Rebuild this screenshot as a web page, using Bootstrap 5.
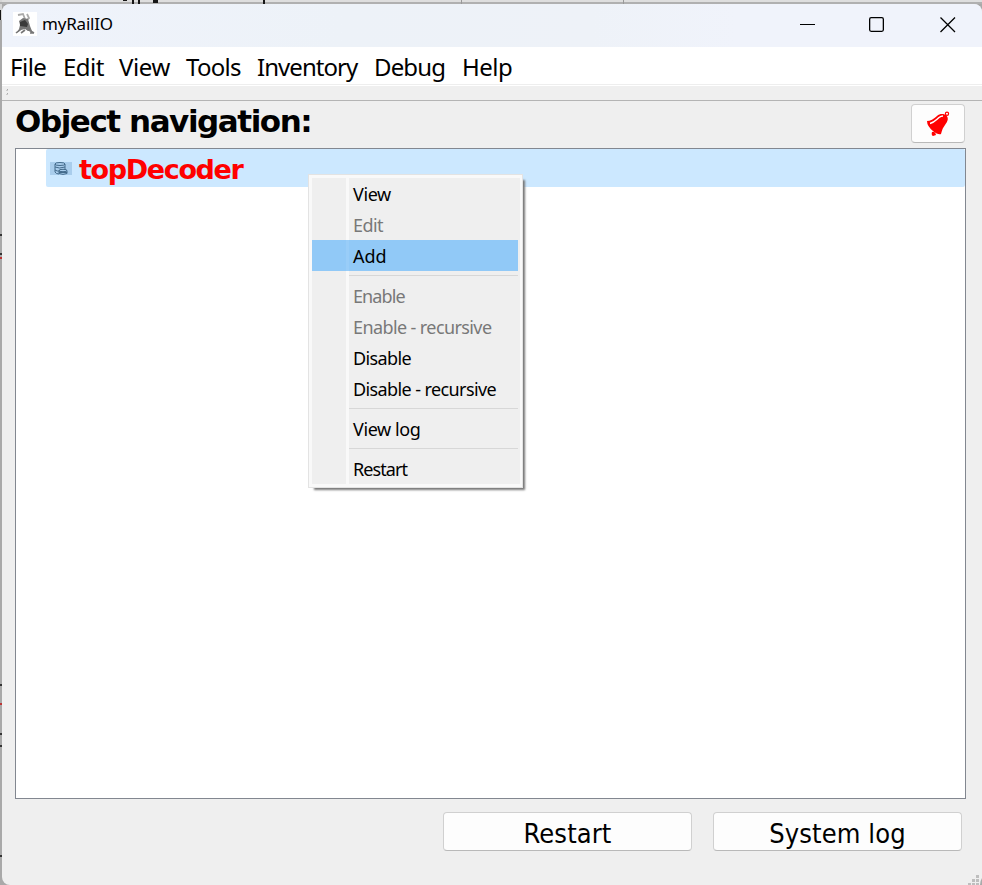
<!DOCTYPE html>
<html lang="en">
<head>
<meta charset="utf-8">
<title>myRailIO</title>
<link href="https://cdn.jsdelivr.net/npm/bootstrap@5.3.0/dist/css/bootstrap.min.css" rel="stylesheet">
<style>
html,body{width:982px;height:885px;overflow:hidden}
body{background:#a9a9a9;color:#000;font-family:"Noto Sans","Open Sans",sans-serif;padding:4px 0 0 2px;position:relative}
.backdrop{position:absolute;left:0;top:0;width:982px;height:885px}
.app-window{position:relative;background:#efefef;width:980px;height:881px;border-radius:8px 8px 0 8px;overflow:hidden}
.title-bar{height:43px;background:linear-gradient(90deg,#eff3fb 0,#edf2f8 35%,#eef2f8 60%,#f0f3fb 75%);padding:0 0 3px 11px}
.title-text{font-size:17px;line-height:24px;letter-spacing:-.2px;margin-left:5px}
.win-icons{width:160px;margin-right:24px}
.menu-bar{height:39px;background:#fff;border-bottom:1px solid #fff;box-shadow:inset 0 -1px #eee;padding-left:8px;gap:16px;font-size:24px;line-height:39px;letter-spacing:-.5px}
.menu-bar a{color:#000;text-decoration:none;white-space:nowrap}
.w-file{width:37px}.w-edit{width:40px}.w-view{width:51px;letter-spacing:-.4px}.w-tools{width:55px;letter-spacing:-.7px}.w-inv{width:101px;letter-spacing:-.95px}.w-debug{width:72px;letter-spacing:-.85px}.w-help{width:50px}
.tool-strip{height:15px;border-bottom:1px solid #b4b4b4;padding:3px 0 0 4px}
.tahoma{font-family:"DejaVu Sans Condensed","DejaVu Sans",sans-serif;font-stretch:condensed}
.tahoma-bold{font-family:"DejaVu Sans",sans-serif;font-stretch:normal;font-weight:700}
.head-row{height:47px;padding:0 17px 0 13px}
.head-row h1{font-size:31px;line-height:40px;margin:0;letter-spacing:-1.45px;white-space:nowrap}
.plain-btn{background:#fdfdfd;border:1px solid #d0d0d0;border-bottom-color:#b9b9b9;border-radius:4px;height:39px;padding:0;color:#000;line-height:41px;font-size:27px;white-space:nowrap}
.bell-btn{width:54px;margin-top:3px}
.tree{margin-left:13px;width:951px;height:651px;background:#fff;border:1px solid #828790}
.tree-row{margin-left:30px;height:38px;background:#cce8ff;border-radius:2px;padding-left:4px}
.tree-row span{font-size:27px;line-height:40px;padding-top:3px;color:#f00;margin-left:7px;letter-spacing:-1.35px}
.foot-row{padding:13px 20px 0 0;gap:21px}
.foot-row .plain-btn{width:249px;letter-spacing:.1px}
.grip{position:absolute;right:0;bottom:0}
.ctx{position:absolute;left:308px;top:174px;width:215px;height:314px;border:1px solid #e3e3e3;background:#f9f9f9;padding:3px 3px;box-shadow:4px 4px 2px -2px #777;font-size:18px;letter-spacing:-.6px}
.ctx-body{width:208px;background:linear-gradient(90deg,#efefef 34px,#f9f9f9 34px,#f9f9f9 37px,#efefef 37px)}
.ctx-item{height:31px;line-height:33px;padding-left:41px;white-space:nowrap}
.ctx-item.off{color:#787878}
.ctx-item.loose{letter-spacing:-.4px}
.ctx-item.tight{letter-spacing:-.9px}
.ctx-item.hot{letter-spacing:0;width:206px;background:linear-gradient(90deg,#91c9f7 34px,#99cdf8 34px,#99cdf8 37px,#91c9f7 37px)}
.ctx-sep{height:9px;margin-left:37px;width:169px;background:linear-gradient(#d7d7d7,#d7d7d7) 0 4px/100% 1px no-repeat}
</style>
</head>
<body>
<svg class="backdrop" width="982" height="885" viewBox="0 0 982 885">
<rect width="982" height="3" fill="#dedede"/><rect width="2" height="20" fill="#d6d6d6"/>
<path d="M0 3H982" stroke="#b0b0b0" stroke-width="2"/>
<path d="M123 0h4v1h-4zM132 0h2v4h-2zM138 0h2v4h-2zM153 0h5v3h-5zM263 0h2v4h-2zM0 10h1v10H0z" fill="#161616"/>
<path d="M461.500 0v4M623.500 0v4" stroke="#999"/>
<path d="M0 235h2M0 254h2M0 685h2M0 734h2M0 746h2M0 856h2" stroke="#333" stroke-width="2"/>
<path d="M0 258h2M0 704h2" stroke="#b33" stroke-width="2"/>
</svg>
<main class="app-window">
<header class="title-bar d-flex align-items-center">
<svg width="24" height="24" viewBox="0 0 24 24"><rect width="24" height="24" fill="#fff"/><path d="M5 3l5-1 2 5M14 2l2 4-3 3" fill="none" stroke="#aaa" stroke-width="1.800"/><path d="M6 9l4-3 5 1 2 7 2 5h-4l-3-2-4 1-4 3 2-4 1-4z" fill="#777"/><path d="M7 10l5-2 3 4-1 3-7-1z" fill="#3a3a3a"/><path d="M3 21l5-4M8 21l4-3M14 17l7 4M17 21h4" stroke="#777" stroke-width="1.600"/></svg>
<span class="title-text">myRailIO</span>
<svg class="win-icons ms-auto" height="24" viewBox="0 0 160 24" fill="none" stroke="#000" stroke-width="1.300"><path d="M2 12.500h15" stroke-width="1"/><rect x="71.650" y="5.650" width="13.700" height="13.700" rx="1.500"/><path d="M142.500 5.500l14.500 14.500M157 5.500L142.500 20"/></svg>
</header>
<nav class="menu-bar d-flex">
<a class="w-file">File</a><a class="w-edit">Edit</a><a class="w-view">View</a><a class="w-tools">Tools</a><a class="w-inv">Inventory</a><a class="w-debug">Debug</a><a class="w-help">Help</a>
</nav>
<div class="tool-strip d-flex"><svg width="4" height="8"><path d="M1 0h1v1H1zM1 4h1v1H1z" fill="#aaa"/><path d="M0 1h2v1H0zM0 5h2v1H0z" fill="#ccc"/></svg></div>
<div class="head-row d-flex justify-content-between">
<h1 class="tahoma-bold">Object navigation:</h1>
<button class="btn plain-btn bell-btn d-flex justify-content-center align-items-center" aria-label="Alarms">
<svg width="24" height="26" viewBox="0 0 24 26"><path d="M1 10C4 10 8 8 11 5C14 2 18 3 20 4C23 7 22 10 19 14C16 18 16 20 15 23Q12 24 7 20Q1 15 1 10Z" fill="red"/><path d="M4 12.500C8 11.500 9 10 13 6.500Q15 5 17 5" fill="none" stroke="#fff" stroke-width="1.500"/><circle cx="21" cy="2.800" r="1.600" fill="#fff" stroke="red" stroke-width="1.200"/><path d="M6 21q3-1 4 3l-3 1q-2-1-1-4z" fill="red"/></svg>
</button>
</div>
<section class="tree">
<div class="tree-row d-flex align-items-center">
<svg width="22" height="13" viewBox="0 0 22 13"><rect width="22" height="13" fill="#a9cdec"/><g fill="none" stroke="#436a8b" stroke-width="1"><ellipse cx="10" cy="2" rx="5" ry="1.500"/><path d="M5 2v8q1 2 4 2M15 2v5M5 5q4 2 10 0M5 8q2 1.500 5 1"/><ellipse cx="13" cy="8.500" rx="4" ry="1.200"/><path d="M9 8.500v3q4 1.800 8 0v-3M9 10.500h8"/></g></svg>
<span class="tahoma-bold">topDecoder</span>
</div>
</section>
<footer class="foot-row d-flex justify-content-end tahoma">
<button class="btn plain-btn">Restart</button><button class="btn plain-btn">System log</button>
</footer>
<svg class="grip" width="14" height="10" viewBox="0 0 14 10"><path d="M8 0h3v3H8zM4 4h3v3H4zM8 4h3v3H8zM0 8h3v2H0zM4 8h3v2H4zM8 8h3v2H8z" fill="#bebebe"/><path d="M14 3v7h-2q0-4 2-7z" fill="#aaa"/></svg>
</main>
<div class="ctx">
<div class="ctx-body">
<div class="ctx-item loose">View</div><div class="ctx-item off">Edit</div><div class="ctx-item hot">Add</div>
<div class="ctx-sep"></div>
<div class="ctx-item off tight">Enable</div><div class="ctx-item off">Enable - recursive</div><div class="ctx-item">Disable</div><div class="ctx-item">Disable - recursive</div>
<div class="ctx-sep"></div>
<div class="ctx-item loose">View log</div>
<div class="ctx-sep"></div>
<div class="ctx-item tight">Restart</div>
</div>
</div>
<script src="https://cdn.jsdelivr.net/npm/bootstrap@5.3.0/dist/js/bootstrap.bundle.min.js"></script>
</body>
</html>
